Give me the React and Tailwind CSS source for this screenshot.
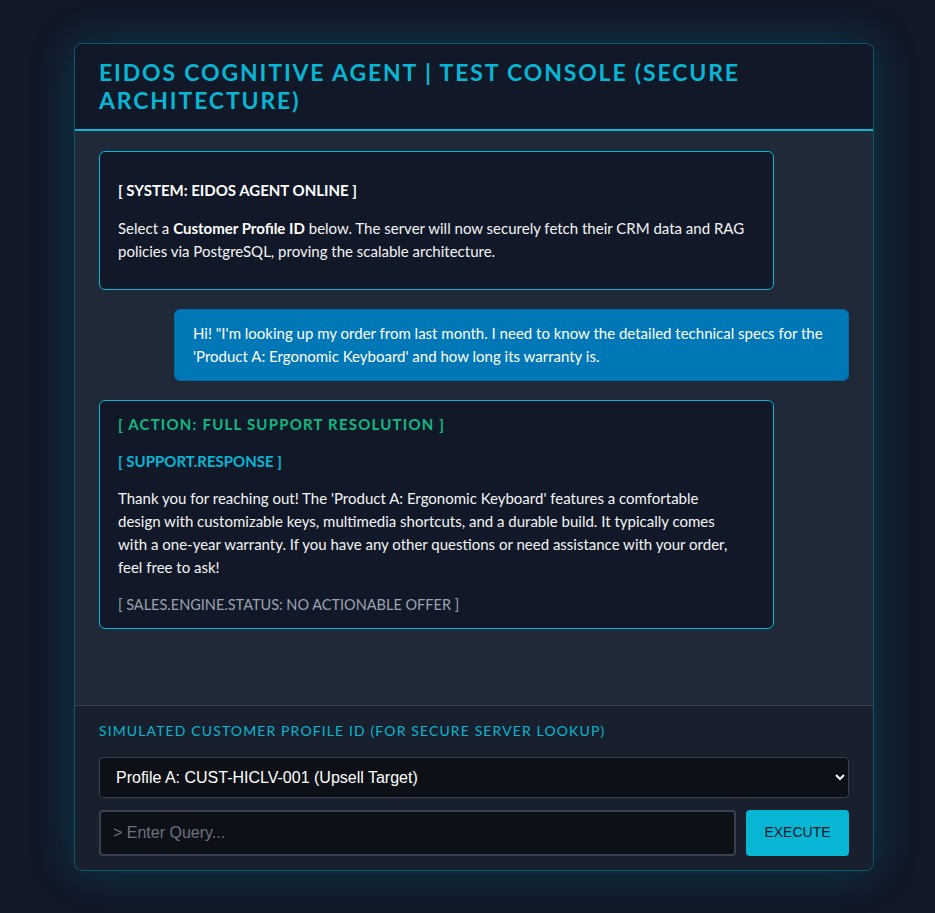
export default function App() {
  const body = { fontFamily: 'Lato, "Noto Sans", sans-serif' };
  const sys = { fontFamily: '"Liberation Sans", Arial, sans-serif' };

  return (
    <div className="min-h-screen bg-[#111827] flex items-center justify-center pl-[13px]" style={body}>
      <div className="w-[800px] h-[828px] flex flex-col rounded-lg border border-[#06b6d4]/40 bg-[#111827] overflow-hidden shadow-[0_0_45px_rgba(6,182,212,0.22)]">
        {/* Header */}
        <div className="px-6 pt-[14px] pb-[15px] border-b-2 border-[#06b6d4] bg-[#111827]">
          <h1 className="text-[23px] leading-[28px] font-bold tracking-[0.08em] uppercase text-[#06b6d4]">
            Eidos Cognitive Agent | Test Console (Secure Architecture)
          </h1>
        </div>

        {/* Chat log */}
        <div className="flex-1 bg-[#1f2937] px-6 pt-5 flex flex-col gap-[19px] overflow-hidden">
          <div className="max-w-[90%] rounded-md border border-[#06b6d4] bg-[#111827] px-[18px] pt-[12px] pb-[11px] text-white text-[15px] leading-[23px]">
            <div className="h-[14px]"></div>
            <div className="font-bold leading-[24px]">[ SYSTEM: EIDOS AGENT ONLINE ]</div>
            <p className="mt-[15px] mb-[15px] text-[#f3f4f6]">
              Select a <b className="font-bold text-white">Customer Profile ID</b> below. The server will now securely fetch their CRM data and RAG policies via PostgreSQL, proving the scalable architecture.
            </p>
          </div>

          <div className="self-end max-w-[90%] rounded-md border border-[#0369a1] bg-[#0077b6] px-[18px] py-[12px] text-white text-[15px] leading-[23px]">
            Hi! "I'm looking up my order from last month. I need to know the detailed technical specs for the 'Product A: Ergonomic Keyboard' and how long its warranty is.
          </div>

          <div className="max-w-[90%] rounded-md border border-[#06b6d4] bg-[#111827] px-[18px] py-[11px] text-[15px] leading-[23px]">
            <div className="font-bold leading-[24px] tracking-[0.08em] text-[#10b981]">[ ACTION: FULL SUPPORT RESOLUTION ]</div>
            <div className="mt-[13px] font-bold leading-[24px] text-[#06b6d4]">[ SUPPORT.RESPONSE ]</div>
            <p className="mt-[14px] text-[#f3f4f6]">
              Thank you for reaching out! The 'Product A: Ergonomic Keyboard' features a comfortable<br />
              design with customizable keys, multimedia shortcuts, and a durable build. It typically comes<br />
              with a one-year warranty. If you have any other questions or need assistance with your order,<br />
              feel free to ask!
            </p>
            <div className="mt-[14px] text-[14.5px] leading-[24px] text-[#9ca3af]">[ SALES.ENGINE.STATUS: NO ACTIONABLE OFFER ]</div>
          </div>
        </div>

        {/* Controls */}
        <div className="border-t border-[#374151] bg-[#18202d] px-6 pt-[15px] pb-[14px]">
          <label className="block text-[14px] leading-[20px] tracking-[0.08em] uppercase text-[#06b6d4]">
            Simulated Customer Profile ID (for secure server lookup)
          </label>
          <select
            className="mt-[16px] w-full h-[41px] rounded-[4px] border border-[#374151] bg-[#0d1117] px-[12px] text-[16px] text-white outline-none"
            style={sys}
            defaultValue="a"
          >
            <option value="a">Profile A: CUST-HICLV-001 (Upsell Target)</option>
            <option value="b">Profile B: CUST-LOCLV-002</option>
          </select>
          <div className="mt-[12px] flex gap-[10px]">
            <input
              className="flex-1 h-[46px] rounded-[4px] border-2 border-[#374151] bg-[#0d1117] px-[12px] text-[16px] text-white placeholder:text-[#6b7280] outline-none"
              style={sys}
              placeholder="> Enter Query..."
            />
            <button
              className="w-[103px] h-[46px] rounded-[4px] bg-[#06b6d4] text-[14px] font-medium text-[#111827] uppercase"
              style={sys}
            >
              Execute
            </button>
          </div>
        </div>
      </div>
    </div>
  );
}
